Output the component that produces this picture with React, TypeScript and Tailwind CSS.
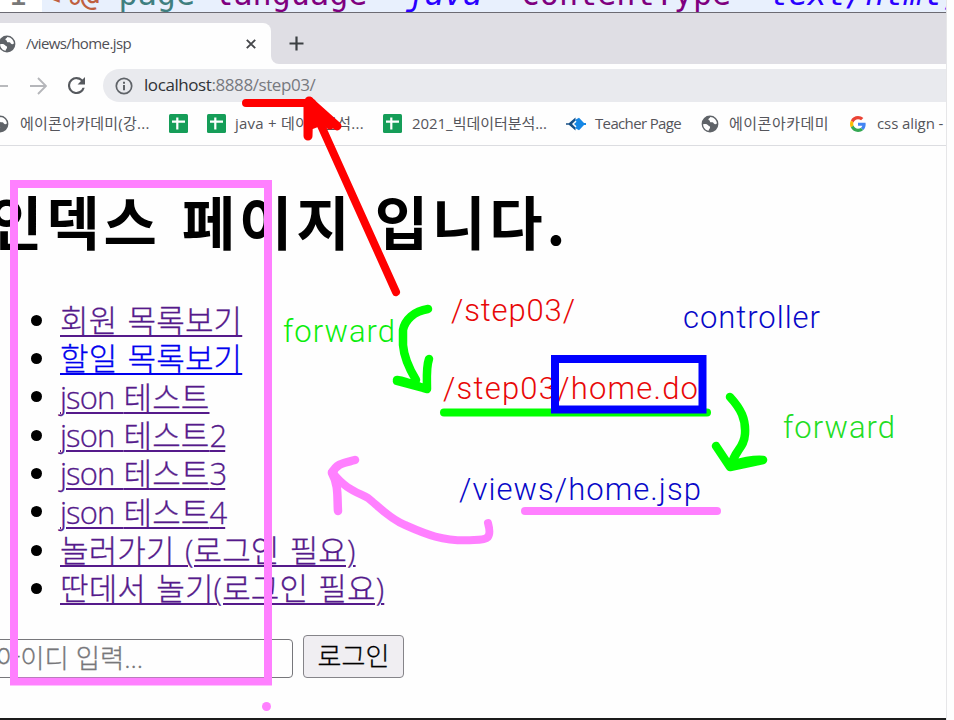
import type { ReactNode } from "react";

const UI = "font-['Open_Sans','Noto_Sans_CJK_KR',sans-serif]";
const KR = "font-['Open_Sans','Noto_Sans_CJK_KR',sans-serif] font-light [-webkit-text-stroke:0.3px]";

function Globe({ className = "" }: { className?: string }) {
  return (
    <svg viewBox="0 0 18 18" className={`h-[18px] w-[18px] shrink-0 ${className}`}>
      <circle cx="9" cy="9" r="8.4" fill="#5f6368" />
      <path d="M2.1 9.2c1.9-.5 4.2-.2 4.8.9.7 1.3 2.2.7 2.2 2.3 0 1.2-1.5 1.4-1.5 3.3C4.5 15.3 2.2 12.6 2.1 9.2Z" fill="#fff" />
      <path d="M9.3 2.1c-.2 1.4-1.9 1.2-1.9 2.4 0 .9 1.5.5 1.5 1.7 0 1 1 1.3 2.2 1.1 1.7-.2 1.3 1.7 2.9 1.9.9.1 1.5-.3 1.9-.9-.2-3.2-2.9-6-6.6-6.2Z" fill="#fff" />
    </svg>
  );
}

function Sheet() {
  return (
    <svg viewBox="0 0 19 19" className="h-[19px] w-[19px] shrink-0">
      <rect width="19" height="19" rx="1.5" fill="#159d58" />
      <path d="M8.3 3.5v12M3 7.6h13" stroke="#fff" strokeWidth="2.2" fill="none" />
    </svg>
  );
}

function Mark({ width, icon, children, text = "ml-[9px]" }: { width: string; icon: ReactNode; children?: ReactNode; text?: string }) {
  return (
    <div className={`flex shrink-0 items-center ${width}`}>
      {icon}
      <span className={`whitespace-nowrap ${text}`}>{children}</span>
    </div>
  );
}

const visited = "text-[#551a8b]";
const links = [
  { label: "회원 목록보기", cls: visited },
  { label: "할일 목록보기", cls: "text-[#0000ee]" },
  { latin: "json ", label: "테스트", cls: visited },
  { latin: "json ", label: "테스트", digit: "2", cls: visited },
  { latin: "json ", label: "테스트", digit: "3", cls: visited },
  { latin: "json ", label: "테스트", digit: "4", cls: visited },
  { label: "놀러가기 (로그인 필요)", cls: visited },
  { label: "딴데서 놀기(로그인 필요)", cls: visited },
];

function CodeLine() {
  return (
    <div className="flex h-[13px] items-start overflow-hidden border-b border-[#6c6b73] bg-white font-['DejaVu_Sans_Mono',monospace] text-[31.8px] leading-[38px]">
      <span className="-mt-[25px] w-[42px] shrink-0 pl-2 text-[#787878]">1</span>
      <div className="h-3 grow overflow-hidden whitespace-pre bg-[#e8f0fd]">
        <div className="-mt-[25px]">
          <span className="text-[#bf5f3f]">&lt;%@</span>
          <span className="text-[#3f7f7f]"> page</span>
          <span className="text-[#7f007f]"> language</span>
          <span className="text-[#8a8a90]">=</span>
          <span className="italic text-[#2a00ff]">"java"</span>
          <span className="text-[#7f007f]"> contentType</span>
          <span className="text-[#8a8a90]">=</span>
          <span className="italic text-[#2a00ff]">"text/html;</span>
        </div>
      </div>
    </div>
  );
}

function Annotations() {
  return (
    <svg viewBox="0 0 954 720" className="pointer-events-none absolute left-0 top-0 h-[720px] w-[954px]" fill="none" strokeLinecap="round" strokeLinejoin="round" strokeWidth="8">
      <g className="font-['Roboto',sans-serif] text-[31px] font-light" stroke="none">
        <text x="451" y="321" textLength="124" fill="#e80808">/step03/</text>
        <text x="443" y="399" textLength="255" fill="#e80808">/step03/home.do</text>
        <text x="683" y="328" textLength="137" fill="#0808c8">controller</text>
        <text x="459" y="500" textLength="242" fill="#0808c8">/views/home.jsp</text>
        <text x="283" y="342" textLength="112" fill="#0ced0c">forward</text>
        <text x="783" y="438" textLength="112" fill="#22dd22">forward</text>
      </g>
      <g stroke="#ff0000">
        <path d="M246 103H312M310 101L396 292" />
        <path d="M308 136L309 101L337 126M311 106L330 125M308 105V136" strokeWidth="9" />
        <path d="M310 104L312 125L325 120Z" fill="#ff0000" />
      </g>
      <g stroke="#00ff00">
        <path d="M428 309C414 311 405 320 403 330V345C404 358 410 370 416 380M429 359C426 367 427 380 427 389L397 381M427 389C420 388 411 382 397 380" strokeWidth="8.5" />
        <path d="M444 412.5H707" />
        <path d="M730 397C741 409 746 419 745 434C744 449 735 449 731 466M716 446L730 467L763 460C752 459 741 462 731 465" strokeWidth="8.5" />
      </g>
      <rect x="555" y="359" width="147.5" height="50.5" stroke="#0000ff" strokeLinejoin="miter" />
      <g stroke="#ff80ff">
        <rect x="14" y="184" width="254" height="497.5" strokeLinejoin="miter" />
        <path d="M525 511H717" />
        <path d="M488 523C492 538 488 540 474 540C442 542 423 533 405 525C390 519 379 507 368 498C357 492 346 490 332 472" />
        <path d="M355 460C344 463 337 463 332 473C339 485 337 499 338 511" strokeWidth="8.5" />
        <circle cx="266.5" cy="706.5" r="4.5" fill="#ff80ff" stroke="none" />
      </g>
    </svg>
  );
}

export default function App() {
  return (
    <div className="relative h-[720px] w-[954px] overflow-hidden bg-[#fefefe]">
      <div className="flex h-full w-[947px] flex-col border-r border-[#e6e6e8]">
        <CodeLine />

        <div className="flex h-[51px] shrink-0 bg-[#dfdee4] pt-[10px]">
          <div className="flex w-[271px] items-center rounded-tr-lg bg-[#fefefe]">
            <Globe className="-ml-[2px]" />
            <span className={`${UI} ml-[10px] w-[220px] whitespace-nowrap text-[15px] tracking-[-0.6px] text-[#505056]`}>/views/home.jsp</span>
            <svg viewBox="0 0 10 10" className="h-[10px] w-[10px]"><path d="M.8.8l8.4 8.4M9.2.8L.8 9.2" stroke="#45474b" strokeWidth="1.9" /></svg>
          </div>
          <div className="grow bg-[#fefefe]">
            <div className="flex h-full items-center rounded-bl-lg bg-[#dfdee4] pl-[18px]">
              <svg viewBox="0 0 15 15" className="h-[15px] w-[15px]"><path d="M7.5.5v14M.5 7.5h14" stroke="#3c4043" strokeWidth="2.2" /></svg>
            </div>
          </div>
        </div>

        <div className="flex h-[43px] shrink-0 items-center">
          <svg viewBox="0 0 18 18" className="-ml-[10px] h-[18px] w-[18px] shrink-0" fill="none" stroke="#b9babd" strokeWidth="1.9"><path d="M18 9H2M9 1L1 9l8 8" /></svg>
          <svg viewBox="0 0 18 18" className="ml-[21px] h-[18px] w-[18px] shrink-0" fill="none" stroke="#b5b6ba" strokeWidth="1.9"><path d="M1 9h15M9 1l8 8-8 8" /></svg>
          <svg viewBox="4 4 16 16" className="ml-[21px] h-[17px] w-[17px] shrink-0" fill="#56595e"><path d="M17.65 6.35A7.96 7.96 0 0 0 12 4a8 8 0 1 0 7.73 10h-2.08A6 6 0 1 1 12 6c1.66 0 3.14.69 4.22 1.78L13 11h7V4l-2.35 2.35z" /></svg>
          <div className="ml-[18px] flex h-[33px] grow items-center rounded-l-full bg-[#e9eaee] pl-3">
            <svg viewBox="0 0 18 18" className="h-[18px] w-[18px]" fill="none" stroke="#5f6368" strokeWidth="1.7"><circle cx="9" cy="9" r="7.7" /><path d="M9 8v5.2M9 4.8v1.9" strokeWidth="2" /></svg>
            <span className={`${UI} ml-[11px] -mt-px whitespace-nowrap text-[17px] tracking-[-0.42px] text-[#77797e]`}>
              <span className="text-[#303236]">localhost</span>:8888/step03/
            </span>
          </div>
        </div>

        <div className={`${UI} flex h-[39px] shrink-0 items-center overflow-hidden border-b border-[#dcdde1] pb-[5px] text-[15px] text-[#55555b]`}>
          <Mark width="w-[178px] -ml-[9px]" text="ml-[11px] tracking-[0.25px]" icon={<Globe />}>에이콘아카데미(강...</Mark>
          <Mark width="w-[38px]" icon={<Sheet />} />
          <Mark width="w-[176px]" text="ml-[9px] tracking-[0.25px]" icon={<Sheet />}>java + 데이터분석...</Mark>
          <Mark width="w-[183px]" text="ml-[10px] tracking-[-0.05px]" icon={<Sheet />}>2021_빅데이터분석...</Mark>
          <Mark
            width="w-[136px]"
            text="ml-[9px] tracking-[-0.65px]"
            icon={
              <svg viewBox="0 0 20 14" className="h-[14px] w-[20px] shrink-0">
                <path d="M0 6.200h2.800L9.500 .5v3L6 7l3.500 3.500v3L2.800 7.800H0z" fill="#174f85" />
                <path d="M13 .8l5 5.200H20v2h-2L13 13.200 9 11l1.500-1.700L8 7l2.500-2.300L9 3z" fill="#1687e5" />
              </svg>
            }
          >Teacher Page</Mark>
          <Mark width="w-[149px] -ml-px" text="ml-[10px] tracking-[0.5px]" icon={<Globe />}>에이콘아카데미</Mark>
          <Mark
            width="w-[95px]"
            text="ml-[11px] tracking-[-0.1px]"
            icon={
              <svg viewBox="0 0 48 48" className="h-4 w-4 shrink-0">
                <path fill="#EA4335" d="M24 9.5c3.54 0 6.71 1.22 9.21 3.6l6.85-6.85C35.9 2.38 30.47 0 24 0 14.62 0 6.51 5.38 2.56 13.22l7.98 6.19C12.43 13.72 17.74 9.5 24 9.5z" />
                <path fill="#4285F4" d="M46.98 24.55c0-1.57-.15-3.09-.38-4.55H24v9.02h12.94c-.58 2.96-2.26 5.48-4.78 7.18l7.73 6c4.51-4.18 7.09-10.36 7.09-17.65z" />
                <path fill="#FBBC05" d="M10.53 28.59c-.48-1.45-.76-2.99-.76-4.59s.27-3.14.76-4.59l-7.98-6.19C.92 16.46 0 20.12 0 24c0 3.88.92 7.54 2.56 10.78l7.97-6.19z" />
                <path fill="#34A853" d="M24 48c6.48 0 11.93-2.13 15.89-5.81l-7.73-6c-2.15 1.45-4.92 2.3-8.16 2.3-6.26 0-11.57-4.22-13.47-9.91l-7.98 6.19C6.51 42.62 14.62 48 24 48z" />
              </svg>
            }
          >css align -</Mark>
        </div>

        <main className="flex min-h-0 grow flex-col overflow-hidden border-b-2 border-[#1c1c1c] pt-[34px]">
          <h1 className="-ml-[11px] h-[80px] whitespace-nowrap font-['Noto_Sans_CJK_KR',sans-serif] text-[58px] font-bold leading-[80px] tracking-[3.9px] text-black [word-spacing:4px]">인덱스 페이지 입니다.</h1>
          <ul className="mt-[41px]">
            {links.map((l, i) => (
              <li key={i} className="flex h-[38.33px] items-center">
                <span className="ml-[31px] h-[11px] w-[11px] rounded-full bg-black" />
                <span className={`${KR} ${l.cls} ml-[18px] whitespace-nowrap text-[31px] leading-[38px] tracking-[0.15px] underline decoration-2 underline-offset-[3px] [word-spacing:2px]`}>
                  {l.latin && <span className="tracking-[-0.9px]">{l.latin}</span>}
                  {l.label}
                  {l.digit && <span className="tracking-[-2px]">{l.digit}</span>}
                </span>
              </li>
            ))}
          </ul>
          <form className="mt-[27.5px] flex items-end gap-[10px]">
            <div className={`${KR} -ml-2 flex h-[39px] w-[301px] items-center whitespace-nowrap rounded border border-[#77777b] pl-[3px] text-[26.4px] text-[#77777a]`}>아이디 입력...</div>
            <button type="button" className={`${KR} flex h-[43px] w-[101px] items-center justify-center whitespace-nowrap rounded border border-[#858489] bg-[#f0eef2] text-[26px] text-black`}>로그인</button>
          </form>
        </main>
      </div>
      <Annotations />
    </div>
  );
}
